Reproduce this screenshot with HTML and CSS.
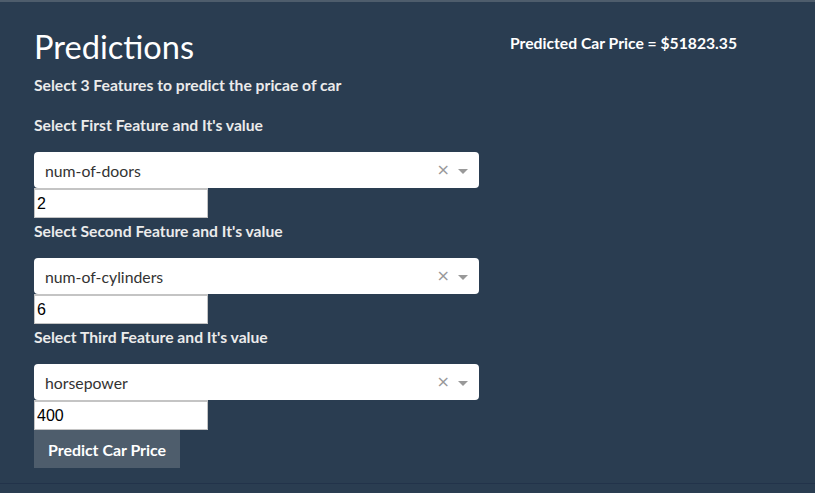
FILE: index.html
```html
<!DOCTYPE html>
<html>
<head>
<meta charset="utf-8">
<link rel="stylesheet" href="styles.css">
</head>
<body>
<div class="topbar"></div>
<div class="page">
  <div class="left">
    <h2 class="title">Predictions</h2>
    <p class="subtitle">Select 3 Features to predict the pricae of car</p>

    <p class="label first">Select First Feature and It's value</p>
    <div class="select">
      <span class="select-value">num-of-doors</span>
      <span class="clear">×</span>
      <span class="arrow"></span>
    </div>
    <input class="num" type="text" value="2">

    <p class="label">Select Second Feature and It's value</p>
    <div class="select">
      <span class="select-value">num-of-cylinders</span>
      <span class="clear">×</span>
      <span class="arrow"></span>
    </div>
    <input class="num" type="text" value="6">

    <p class="label">Select Third Feature and It's value</p>
    <div class="select">
      <span class="select-value">horsepower</span>
      <span class="clear">×</span>
      <span class="arrow"></span>
    </div>
    <input class="num" type="text" value="400">

    <button class="btn">Predict Car Price</button>
  </div>
  <div class="right">
    <p class="result">Predicted Car Price = $51823.35</p>
  </div>
</div>
<div class="bottom-line"></div>
</body>
</html>
```

FILE: styles.css
```css
html, body {
  margin: 0;
  padding: 0;
  background: #2a3d51;
  height: 100%;
}
body {
  font-family: Lato, "Open Sans", sans-serif;
  color: #ebebeb;
  font-size: 15.7px;
  overflow: hidden;
}
.topbar {
  height: 2px;
  background: #4e5d6c;
}
.page {
  display: flex;
  padding-left: 34px;
  height: 482px;
  box-sizing: border-box;
  border-bottom: 1px solid #22334a;
}
.left {
  width: 445px;
  display: flex;
  flex-direction: column;
  align-items: flex-start;
}
.right {
  margin-left: 31px;
}
.title {
  font-size: 32.6px;
  font-weight: 400;
  line-height: 33px;
  margin: 28px 0 10px;
  color: #ffffff;
}
.subtitle {
  margin: 0 0 16px;
  font-weight: 700;
  line-height: 24px;
}
.label {
  margin: 1px 0 15px;
  font-weight: 700;
  line-height: 24px;
}
.label.first {
  margin-top: 0;
}
.select {
  width: 445px;
  height: 36px;
  background: #ffffff;
  border-radius: 4px;
  box-sizing: border-box;
  display: flex;
  align-items: center;
  padding-left: 11px;
  padding-right: 11px;
}
.select-value {
  flex: 1;
  color: #333333;
  font-size: 15.8px;
}
.clear {
  color: #999999;
  line-height: 1;
  margin-right: 8px;
  font-family: "DejaVu Sans", sans-serif;
  font-size: 16px;
}
.arrow {
  width: 0;
  height: 0;
  border-left: 5px solid transparent;
  border-right: 5px solid transparent;
  border-top: 5px solid #999999;
  margin-top: 2px;
}
.num {
  width: 174px;
  height: 30px;
  box-sizing: border-box;
  border: 1px solid #c4c4c4;
  border-top-width: 2px;
  background: #ffffff;
  margin: 0;
  padding: 0 2px;
  font-family: "Liberation Sans", Arial, sans-serif;
  font-size: 16px;
  color: #000000;
}
.btn {
  margin: 0;
  height: 38px;
  padding: 0 14px;
  border: 0;
  background: #4e5d6c;
  color: #ffffff;
  font-family: Lato, sans-serif;
  font-size: 15.9px;
  font-weight: 700;
}
.result {
  margin: 29px 0 0;
  line-height: 24px;
  font-weight: 700;
  color: #ffffff;
}
```
